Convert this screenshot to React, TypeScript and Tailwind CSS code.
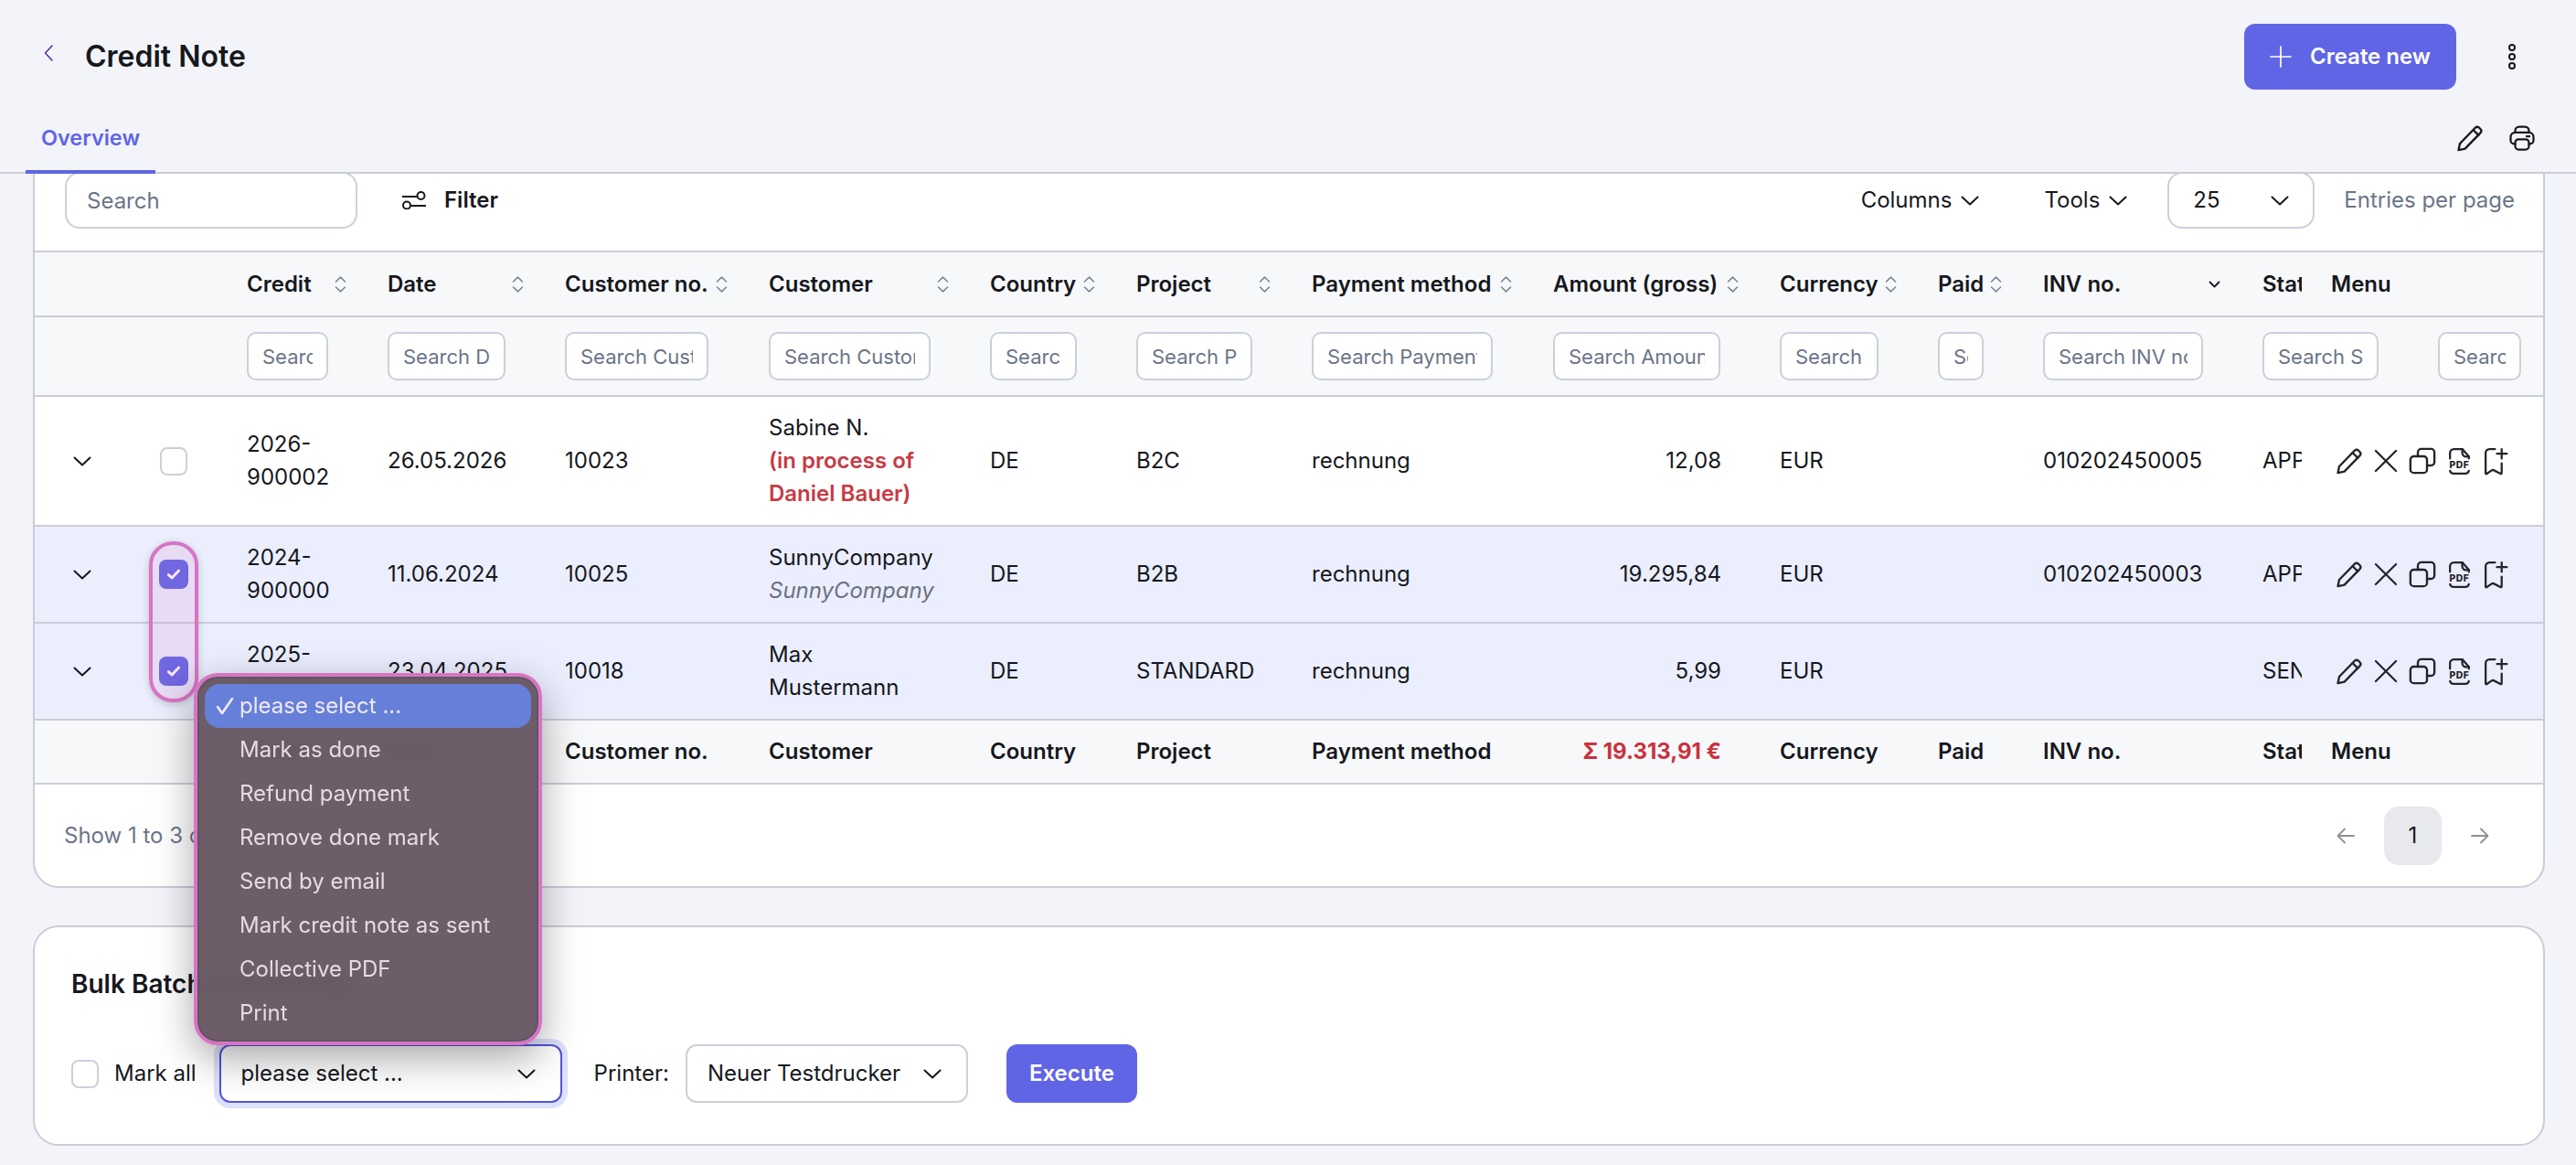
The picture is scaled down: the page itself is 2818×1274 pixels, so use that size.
import React from 'react';

type IconProps = { className?: string };

const Stroke: React.FC<IconProps & { children: React.ReactNode; viewBox?: string; width?: number }> = ({ className, children, viewBox = '0 0 24 24', width = 2 }) => (
  <svg viewBox={viewBox} fill="none" stroke="currentColor" strokeWidth={width} strokeLinecap="round" strokeLinejoin="round" className={className}>
    {children}
  </svg>
);

const ChevronDown: React.FC<IconProps> = ({ className }) => (
  <Stroke viewBox="0 0 20 11" className={className}>
    <path d="M1.500 1.500 10 9.500l8.500-8" />
  </Stroke>
);

const Pencil: React.FC<IconProps> = ({ className }) => (
  <Stroke className={className} width={1.9}>
    <path d="M2 22.500l1.200-5.700L16.600 3a2.500 2.500 0 0 1 3.500 0l1 1a2.500 2.500 0 0 1 0 3.500L7.700 21.300z" />
    <path d="M15 5l4.500 4.500" />
  </Stroke>
);

const CloseX: React.FC<IconProps> = ({ className }) => (
  <Stroke className={className} width={1.9}>
    <path d="M2.500 2.500l19 19M21.500 2.500l-19 19" />
  </Stroke>
);

const CopyIcon: React.FC<IconProps> = ({ className }) => (
  <Stroke className={className} width={1.9}>
    <rect x="1.500" y="8" width="14.500" height="14.500" rx="3" />
    <path d="M8 8V4.500a3 3 0 0 1 3-3h8.500a3 3 0 0 1 3 3V13a3 3 0 0 1-3 3H16" />
  </Stroke>
);

const PdfIcon: React.FC<IconProps> = ({ className }) => (
  <svg viewBox="0 0 24 30" className={className} fill="none" stroke="currentColor" strokeWidth="2.200" strokeLinecap="round" strokeLinejoin="round">
    <path d="M2 12V6a4 4 0 0 1 4-4h9l7 8v2" />
    <path d="M15 2v4a4 4 0 0 0 4 4h3" />
    <path d="M2 25a4 4 0 0 0 4 3h12a4 4 0 0 0 4-3" />
    <text x="12" y="22" textAnchor="middle" fontSize="10" fontWeight="800" fill="currentColor" stroke="none" letterSpacing="0.500">PDF</text>
  </svg>
);

const BookmarkPlus: React.FC<IconProps> = ({ className }) => (
  <Stroke viewBox="0 0 26 30" className={className} width={2.200}>
    <path d="M12 2H6a4 4 0 0 0-4 4v21.500c0 .8.700 1 1.300.6l4.700-3.300a3 3 0 0 1 3.400 0l6.300 3.300c.7.400 1.300.1 1.300-.7V17" />
    <path d="M19 2v10M14 7h10.500" />
  </Stroke>
);

const SortIcon: React.FC = () => (
  <Stroke viewBox="0 0 13 18" className="h-[18px] w-[13px] shrink-0 text-[#7b8496]" width={1.6}>
    <path d="M1.500 6 6.500 1.200 11.500 6M1.500 12l5 4.800 5-4.800" />
  </Stroke>
);

const columnHeads = ['Credit', 'Date', 'Customer no.', 'Customer', 'Country', 'Project', 'Payment method', 'Amount (gross)', 'Currency', 'Paid', 'INV no.'];

const filters = [
  { label: 'Search Credit', w: 'w-[89px]' },
  { label: 'Search Date', w: 'w-[129px]' },
  { label: 'Search Customer no.', w: 'w-[157px]' },
  { label: 'Search Customer', w: 'w-[177px]' },
  { label: 'Search Country', w: 'w-[95px]' },
  { label: 'Search Project', w: 'w-[127px]' },
  { label: 'Search Payment method', w: 'w-[198px]' },
  { label: 'Search Amount (gross)', w: 'w-[183px]' },
  { label: 'Search Currency', w: 'w-[108px]' },
  { label: 'Search Paid', w: 'w-[50px]' },
  { label: 'Search INV no.', w: 'w-[175px]' },
];

const menuItems = ['Mark as done', 'Refund payment', 'Remove done mark', 'Send by email', 'Mark credit note as sent', 'Collective PDF', 'Print'];

const rows = [
  {
    credit: '2026-900002', date: '26.05.2026', customerNo: '10023', project: 'B2C', amount: '12,08', inv: '010202450005', status: 'APPROVED', selected: false, height: 'h-[142px]',
    customer: (
      <>
        <div>Sabine N.</div>
        <div className="font-semibold text-[#c73a45]">(in process of Daniel Bauer)</div>
      </>
    ),
  },
  {
    credit: '2024-900000', date: '11.06.2024', customerNo: '10025', project: 'B2B', amount: '19.295,84', inv: '010202450003', status: 'APPROVED', selected: true, height: 'h-[106px]',
    customer: (
      <>
        <div>SunnyCompany</div>
        <div className="italic text-[#6b7280]">SunnyCompany</div>
      </>
    ),
  },
  {
    credit: '2025-900001', date: '23.04.2025', customerNo: '10018', project: 'STANDARD', amount: '5,99', inv: '', status: 'SENT', selected: true, height: 'h-[106px]',
    customer: <div>Max Mustermann</div>,
  },
];

const cellBorder = 'border-b-2 border-[#cbcdd6]';
const cellPad = 'px-[32px]';
const filterInput = 'h-[53px] rounded-[10px] border-2 border-[#cbd0d8] bg-white px-[15px] text-[22px] outline-none placeholder:text-[#6b7588]';

const RowCheckbox: React.FC<{ checked: boolean }> = ({ checked }) =>
  checked ? (
    <span className="flex h-[32px] w-[32px] items-center justify-center rounded-[8px] bg-[#6065e6] text-white">
      <Stroke viewBox="0 0 16 16" className="h-[18px] w-[18px]" width={2.600}>
        <path d="M3 8.500l3.300 3L13 4.500" />
      </Stroke>
    </span>
  ) : (
    <span className="block h-[31px] w-[30px] rounded-[8px] border-2 border-[#cbd0d8] bg-white" />
  );

const Dropdown: React.FC<{ label: string; className: string }> = ({ label, className }) => (
  <button className={`flex h-[64px] items-center justify-between rounded-[12px] bg-white text-left ${className}`}>
    <span>{label}</span>
    <ChevronDown className="h-[11px] w-[20px]" />
  </button>
);

export default function App() {
  return (
    <div className="relative h-[1274px] overflow-hidden bg-[#f3f4f9] text-[24px] leading-[36px] text-[#16181d] [font-family:Inter,sans-serif]">
      {/* Page header */}
      <header className="relative z-10 flex h-[190px] flex-col border-b-2 border-[#cbcdd6] bg-[#f3f4f9]">
        <div className="flex items-center justify-between pl-[48px] pr-[66px] pt-[26px]">
          <div className="flex items-center gap-[35px]">
            <Stroke viewBox="0 0 10 18" className="-mt-[8px] h-[18px] w-[10px] text-[#4f2c9c]" width={1.500}>
              <path d="M9 1 1.500 9 9 17" />
            </Stroke>
            <h1 className="text-[32px] font-semibold leading-[44px] text-[#16181d]">Credit Note</h1>
          </div>
          <div className="flex items-center gap-[57px]">
            <button className="flex h-[72px] w-[232px] items-center justify-center gap-[20px] rounded-[12px] bg-[#6065e6] font-semibold text-white">
              <Stroke className="h-[24px] w-[24px]" width={1.700}>
                <path d="M12 1v22M1 12h22" />
              </Stroke>
              Create new
            </button>
            <svg viewBox="0 0 8 28" className="h-[28px] w-[8px] text-[#16181d]" fill="none" stroke="currentColor" strokeWidth="2">
              <circle cx="4" cy="4" r="3" />
              <circle cx="4" cy="14" r="3" />
              <circle cx="4" cy="24" r="3" />
            </svg>
          </div>
        </div>
        <div className="-mb-[2px] mt-auto flex h-[57px] items-start justify-between pl-[28px] pr-[44px]">
          <div className="w-[142px] border-b-4 border-[#6065e6] pb-[17px] text-center text-[23.500px] font-semibold text-[#6065e6]">Overview</div>
          <div className="flex gap-[27px] pt-[3px] text-[#16181d]">
            <Pencil className="h-[30px] w-[30px]" />
            <Stroke className="h-[30px] w-[30px]" width={1.800}>
              <path d="M6 17H5a3 3 0 0 1-3-3v-3a4 4 0 0 1 4-4h12a4 4 0 0 1 4 4v3a3 3 0 0 1-3 3h-1" />
              <path d="M6 7V5.500A3.500 3.500 0 0 1 9.500 2h5A3.500 3.500 0 0 1 18 5.500V7" />
              <rect x="6" y="13" width="12" height="9" rx="3" />
              <path d="M16 10.500h2.500" />
            </Stroke>
          </div>
        </div>
      </header>

      <main className="flex flex-col gap-[41px] pl-[36px] pr-[34px]">
        {/* List card, scrolled so that its top runs under the header */}
        <section className="-mt-[40px] overflow-hidden rounded-[28px] border-2 border-[#cbcdd6] bg-white">
          <div className={`flex items-center pb-[24px] pl-[33px] pr-[31px] pt-[36px] ${cellBorder}`}>
            <input placeholder="Search" className="h-[62px] w-[320px] rounded-[16px] border-2 border-[#cbd0d8] px-[22px] outline-none placeholder:text-[#6b7588]" />
            <button className="ml-[49px] flex items-center gap-[20px] font-semibold">
              <svg viewBox="0 0 26 20" className="h-[20px] w-[26px]" fill="none" stroke="currentColor" strokeWidth="2">
                <path d="M0 6h16M10 16h16" />
                <circle cx="20.500" cy="5" r="4" />
                <circle cx="5" cy="15.500" r="4" />
              </svg>
              Filter
            </button>
            <button className="ml-auto flex items-center gap-[10px]">
              Columns
              <ChevronDown className="h-[11px] w-[20px]" />
            </button>
            <button className="ml-[71px] flex items-center gap-[10px]">
              Tools
              <ChevronDown className="h-[11px] w-[20px]" />
            </button>
            <Dropdown label="25" className="ml-[44px] !h-[62px] w-[161px] rounded-[16px] border-2 border-[#cbd0d8] px-[26px]" />
            <span className="ml-[32px] text-[#6b7588]">Entries per page</span>
          </div>

          <table className="w-full table-fixed border-separate border-spacing-0">
            <colgroup>
              <col className="w-[104px]" />
              <col className="w-[96px]" />
              <col className="w-[154px]" />
              <col className="w-[194px]" />
              <col className="w-[223px]" />
              <col className="w-[242px]" />
              <col className="w-[160px]" />
              <col className="w-[192px]" />
              <col className="w-[264px]" />
              <col className="w-[248px]" />
              <col className="w-[173px]" />
              <col className="w-[115px]" />
              <col className="w-[239px]" />
              <col className="w-[76px]" />
              <col className="w-[264px]" />
            </colgroup>
            <thead>
              <tr className="bg-[#f7f8fa] text-left font-semibold">
                <th className={`h-[71px] ${cellBorder}`} colSpan={2} />
                {columnHeads.map((head) => (
                  <th key={head} className={`pl-[32px] pr-[13px] font-semibold ${cellBorder}`}>
                    <div className="flex items-center justify-between whitespace-nowrap">
                      {head}
                      {head === 'INV no.' ? (
                        <Stroke viewBox="0 0 13 8" className="h-[8px] w-[13px]" width={1.800}>
                          <path d="M1.500 1.500 6.500 6.500l5-5" />
                        </Stroke>
                      ) : (
                        <SortIcon />
                      )}
                    </div>
                  </th>
                ))}
                <th className={`overflow-hidden whitespace-nowrap pl-[33px] font-semibold ${cellBorder}`}>Status</th>
                <th className={`pl-[32px] font-semibold ${cellBorder}`}>Menu</th>
              </tr>
              <tr className="bg-[#f7f8fa]">
                <td className={`h-[87px] ${cellBorder}`} colSpan={2} />
                {filters.map((filter) => (
                  <td key={filter.label} className={`pl-[32px] ${cellBorder}`}>
                    <input placeholder={filter.label} className={`${filterInput} ${filter.w}`} />
                  </td>
                ))}
                <td colSpan={2} className={`pl-[33px] ${cellBorder}`}>
                  <div className="flex gap-[65px]">
                    <input placeholder="Search Status" className={`${filterInput} w-[127px]`} />
                    <input placeholder="Search Menu" className={`${filterInput} w-[91px]`} />
                  </div>
                </td>
              </tr>
            </thead>
            <tbody>
              {rows.map((row) => (
                <tr key={row.credit} className={row.selected ? 'bg-[#ebeefd]' : 'bg-white'}>
                  <td className={`${row.height} ${cellBorder}`}>
                    <div className="flex justify-center">
                      <ChevronDown className="h-[11px] w-[20px]" />
                    </div>
                  </td>
                  <td className={cellBorder}>
                    <div className="flex justify-center">
                      <RowCheckbox checked={row.selected} />
                    </div>
                  </td>
                  <td className={`${cellPad} ${cellBorder}`}>{row.credit}</td>
                  <td className={`${cellPad} ${cellBorder}`}>{row.date}</td>
                  <td className={`${cellPad} ${cellBorder}`}>{row.customerNo}</td>
                  <td className={`${cellPad} ${cellBorder}`}>{row.customer}</td>
                  <td className={`${cellPad} ${cellBorder}`}>DE</td>
                  <td className={`${cellPad} ${cellBorder}`}>{row.project}</td>
                  <td className={`${cellPad} ${cellBorder}`}>rechnung</td>
                  <td className={`${cellPad} text-right ${cellBorder}`}>{row.amount}</td>
                  <td className={`${cellPad} ${cellBorder}`}>EUR</td>
                  <td className={`${cellPad} ${cellBorder}`} />
                  <td className={`${cellPad} ${cellBorder}`}>{row.inv}</td>
                  <td className={`overflow-hidden whitespace-nowrap pl-[33px] ${cellBorder}`}>{row.status}</td>
                  <td className={`pl-[37px] ${cellBorder}`}>
                    <div className="flex items-center gap-[10px] text-[#23252b]">
                      <span className="flex w-[30px] justify-center"><Pencil className="h-[30px] w-[30px]" /></span>
                      <span className="flex w-[30px] justify-center"><CloseX className="h-[28px] w-[28px]" /></span>
                      <span className="flex w-[30px] justify-center"><CopyIcon className="h-[32px] w-[32px]" /></span>
                      <span className="flex w-[30px] justify-center"><PdfIcon className="h-[31px] w-[25px]" /></span>
                      <span className="flex w-[30px] justify-center"><BookmarkPlus className="h-[31px] w-[27px]" /></span>
                    </div>
                  </td>
                </tr>
              ))}
            </tbody>
            <tfoot>
              <tr className="bg-[#f7f8fa] text-left font-semibold">
                <td className={`h-[70px] ${cellBorder}`} colSpan={2} />
                {columnHeads.map((head) =>
                  head === 'Amount (gross)' ? (
                    <td key={head} className={`${cellPad} whitespace-nowrap text-right font-bold text-[#c9323d] ${cellBorder}`}>Σ 19.313,91 €</td>
                  ) : (
                    <td key={head} className={`whitespace-nowrap pl-[32px] ${cellBorder}`}>{head}</td>
                  ),
                )}
                <td className={`overflow-hidden whitespace-nowrap pl-[33px] ${cellBorder}`}>Status</td>
                <td className={`pl-[32px] ${cellBorder}`}>Menu</td>
              </tr>
            </tfoot>
          </table>

          <div className="flex h-[111px] items-center justify-between pl-[32px] pr-[59px]">
            <span className="text-[#6b7588]">Show 1 to 3 of 3 entries (2 selected items)</span>
            <div className="flex items-center gap-[32px] text-[#8c8f96]">
              <Stroke viewBox="0 0 20 18" className="h-[18px] w-[20px]" width={1.800}>
                <path d="M19 9H2M9 1.500 1.500 9 9 16.500" />
              </Stroke>
              <span className="flex h-[64px] w-[63px] items-center justify-center rounded-[16px] bg-[#e8e9ed] text-[#16181d]">1</span>
              <Stroke viewBox="0 0 20 18" className="h-[18px] w-[20px]" width={1.800}>
                <path d="M1 9h17M11 1.500 18.500 9 11 16.500" />
              </Stroke>
            </div>
          </div>
        </section>

        {/* Bulk actions */}
        <section className="h-[241px] rounded-[28px] border-2 border-[#cbcdd6] bg-white pl-[40px] pt-[44px]">
          <h2 className="text-[28px] font-semibold leading-[36px]">Bulk Batch Processing</h2>
          <div className="mt-[48px] flex items-center">
            <span className="block h-[31px] w-[30px] rounded-[8px] border-2 border-[#cbd0d8] bg-white" />
            <span className="ml-[17px]">Mark all</span>
            <Dropdown label="please select ..." className="ml-[25px] w-[375px] border-2 border-[#4f55dc] pl-[22px] pr-[27px] ring-[6px] ring-[#dfe0fa]" />
            <span className="ml-[35px]">Printer:</span>
            <Dropdown label="Neuer Testdrucker" className="ml-[18px] w-[309px] border-2 border-[#cbd0d8] pl-[22px] pr-[27px]" />
            <button className="ml-[42px] h-[64px] w-[143px] rounded-[12px] bg-[#6065e6] font-semibold text-white">Execute</button>
          </div>
        </section>
      </main>

      {/* Highlight around the ticked rows */}
      <div className="absolute left-[163px] top-[592px] z-20 h-[176px] w-[54px] rounded-[26px] border-4 border-[#d874c4] bg-[#d874c4]/15 shadow-[0_2px_8px_rgba(0,0,0,0.2)]" />

      {/* Open select popup, with its highlight */}
      <div className="absolute left-[212px] top-[736px] z-30 h-[407px] w-[381px] rounded-[26px] border-4 border-[#d874c4] bg-[#645460]/95 px-[8px] pb-[7px] pt-[8px] leading-[48px] text-[#e6dbe4] shadow-[0_14px_44px_rgba(0,0,0,0.35),inset_0_0_0_2px_#5d5660] backdrop-blur-sm">
        <div className="flex h-[48px] items-center rounded-[16px] bg-[#6680d9] text-[#f1e8f3]">
          <span className="flex w-[38px] justify-center pl-[6px]">
            <Stroke viewBox="0 0 20 20" className="h-[20px] w-[20px]" width={2.600}>
              <path d="M2 11l5 7L18 2" />
            </Stroke>
          </span>
          please select ...
        </div>
        {menuItems.map((item) => (
          <div key={item} className="h-[48px] pl-[38px]">{item}</div>
        ))}
      </div>
    </div>
  );
}
